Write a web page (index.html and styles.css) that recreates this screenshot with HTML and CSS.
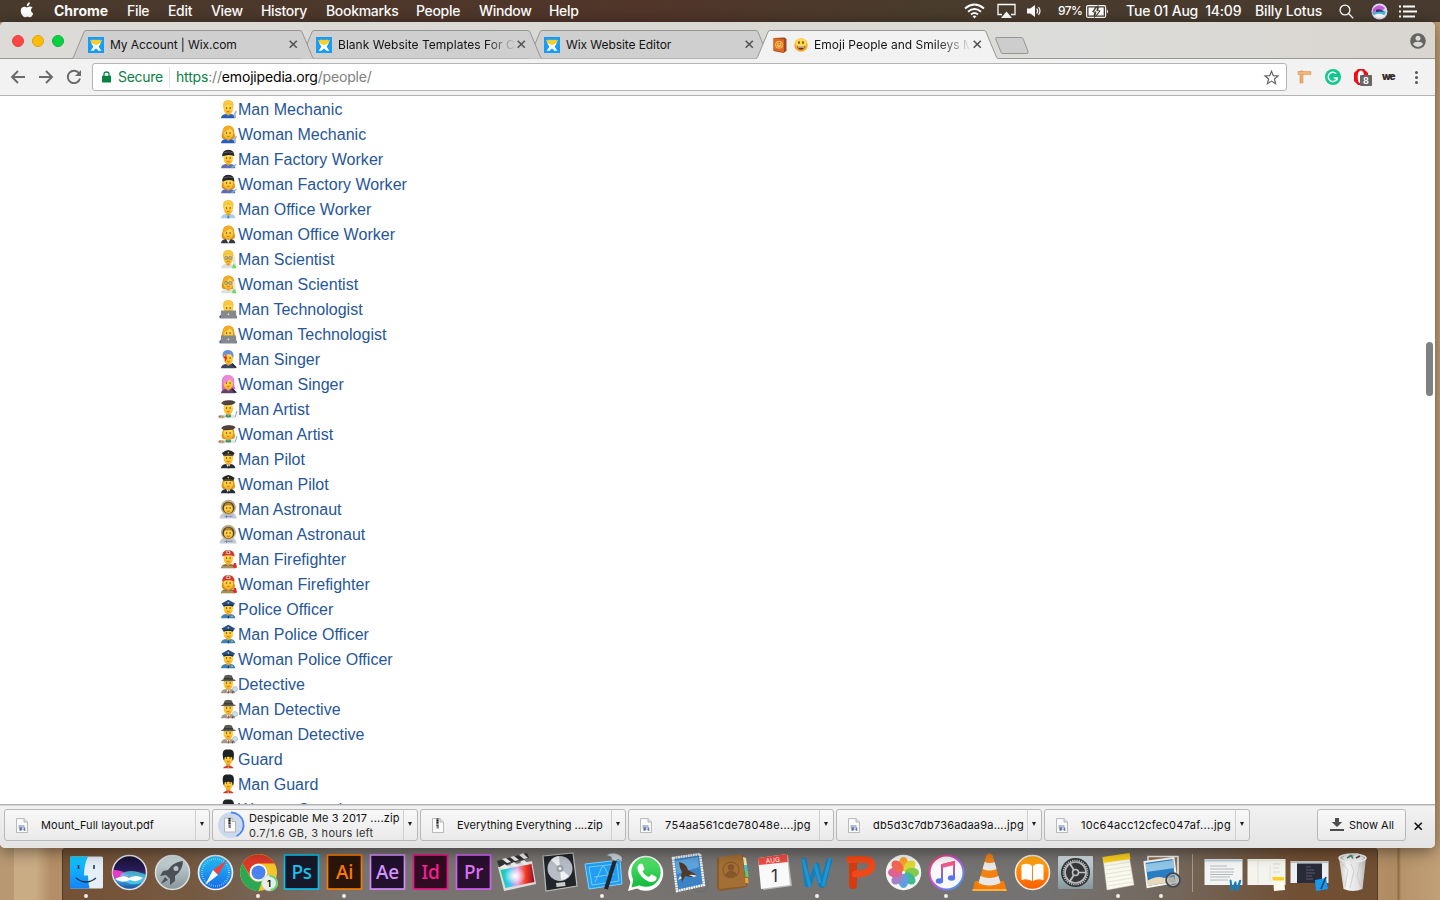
FILE: index.html
```html
<!DOCTYPE html>
<html lang="en">
<head>
<meta charset="utf-8">
<title>Emoji People and Smileys</title>
<link rel="stylesheet" href="styles.css">
</head>
<body>
<svg class="defs" aria-hidden="true">
<defs>
<linearGradient id="skin" x1="0" y1="0" x2="0" y2="1"><stop offset="0" stop-color="#ffe066"/><stop offset=".6" stop-color="#ffcb3a"/><stop offset="1" stop-color="#f3ad22"/></linearGradient>
<linearGradient id="finder" x1="0" y1="0" x2="0" y2="1"><stop offset="0" stop-color="#10ccff"/><stop offset="1" stop-color="#1583f7"/></linearGradient>
<linearGradient id="silver" x1="0" y1="0" x2="0" y2="1"><stop offset="0" stop-color="#cfdcdf"/><stop offset="1" stop-color="#87969c"/></linearGradient>
<linearGradient id="blue" x1="0" y1="0" x2="0" y2="1"><stop offset="0" stop-color="#21c5fa"/><stop offset="1" stop-color="#1767e2"/></linearGradient>
<linearGradient id="orange" x1="0" y1="0" x2="0" y2="1"><stop offset="0" stop-color="#ffae13"/><stop offset="1" stop-color="#ff5d00"/></linearGradient>
<linearGradient id="green" x1="0" y1="0" x2="0" y2="1"><stop offset="0" stop-color="#5ce66d"/><stop offset="1" stop-color="#12b83d"/></linearGradient>
<linearGradient id="rainbow"><stop offset="0" stop-color="#0ccf8f"/><stop offset=".25" stop-color="#35c8f0"/><stop offset=".5" stop-color="#e8a0e0"/><stop offset=".75" stop-color="#f5391d"/><stop offset="1" stop-color="#8a1030"/></linearGradient>
<radialGradient id="glow"><stop offset="0" stop-color="#fff"/><stop offset="1" stop-color="#fff" stop-opacity="0"/></radialGradient>
<linearGradient id="note" x1="0" y1="0" x2="0" y2="1"><stop offset="0" stop-color="#fb4b7d"/><stop offset="1" stop-color="#3c7cf2"/></linearGradient>
<linearGradient id="ring" x1="0" y1="0" x2="1" y2="1"><stop offset="0" stop-color="#fb3c58"/><stop offset=".5" stop-color="#c250e8"/><stop offset="1" stop-color="#20aaf8"/></linearGradient>
<linearGradient id="night" x1="0" y1="0" x2="0" y2="1"><stop offset="0" stop-color="#151230"/><stop offset=".45" stop-color="#2c1c5c"/><stop offset=".75" stop-color="#3a9be0"/><stop offset="1" stop-color="#164c96"/></linearGradient>
<linearGradient id="cup"><stop offset="0" stop-color="#c4c4c4"/><stop offset=".3" stop-color="#f5f5f5"/><stop offset=".7" stop-color="#e2e2e2"/><stop offset="1" stop-color="#b4b4b4"/></linearGradient>

<g id="face"><ellipse cx="10.300" cy="9.300" rx="4.800" ry="5.900" fill="url(#skin)"/><circle cx="8.500" cy="9" r=".7" fill="#4b3312"/><circle cx="12.100" cy="9" r=".7" fill="#4b3312"/><path d="M8.900 12.200q1.400.8 2.800 0" fill="none" stroke="#b5651d" stroke-width=".8"/></g>
<g id="body"><path d="M8.200 13h4.200v4H8.200z" fill="#e3a023"/><path d="M3 19.300Q3 15.500 7.800 14.900l2.500 2 2.500-2q4.400.6 4.500 4.400z" fill="currentColor"/></g>
<path id="short" d="M5.600 8.500Q4 1.300 10.300 1.300T15 8.500L14.200 5.800Q10.300 4.300 6.400 5.800z" fill="#fcc93c" stroke="#d99c1c" stroke-width=".35"/>
<path id="long" d="M5.400 15Q2.600 14 4.300 8.500 5 1.700 10.300 1.600q6 .1 6 7.400 1.900 5-1.100 6z" fill="#dd941a"/>
<path id="fringe" d="M5.300 9Q5 1.800 10.300 1.800T15.400 9Q15 6.500 12 4.500 9.500 6.800 5.300 9z" fill="#f3ad25"/>
<path id="tool" d="M17 11v2l-1.700 2 1 4.100h1.800l-.4-4L19 13l-.6-1.500-.6 1.300z" fill="#aab4bd"/>
<g id="man"><use href="#face"/><use href="#short"/></g>
<g id="woman"><use href="#face"/><use href="#fringe"/></g>
<g id="mechanic-m"><use href="#body" color="#285cc5"/><use href="#man"/><use href="#tool"/></g>
<g id="mechanic-w"><use href="#long"/><use href="#body" color="#285cc5"/><use href="#woman"/><use href="#tool"/></g>
<g id="helmet"><path d="M4.300 7.600Q4 .8 10.300.8t6.100 6.500Q10.300 4.600 4.300 7.600z" fill="#23272c"/><path d="M5.300 4q5-2 10-.2" fill="none" stroke="#626872" stroke-width=".8"/></g>
<g id="factory-m"><use href="#body" color="#5c6eb5"/><use href="#face"/><use href="#helmet"/><path d="M13 18l4-2.500 2-1-2 3-3 1.700z" fill="#74add2"/></g>
<g id="factory-w"><use href="#long"/><use href="#factory-m"/></g>
<g id="office-m"><use href="#body" color="#a8cce9"/><use href="#man"/><path d="M9.700 16.500h1.200l.5 2.800H9.200z" fill="#477cac"/></g>
<g id="office-w"><use href="#long"/><use href="#body" color="#303745"/><use href="#woman"/><path d="M8.300 15.200l2 4 2-4-2 1z" fill="#fff"/></g>
<g id="glasses"><circle cx="8.300" cy="9" r="1.600" fill="#fff6" stroke="#5a5a5a" stroke-width=".6"/><circle cx="12.300" cy="9" r="1.600" fill="#fff6" stroke="#5a5a5a" stroke-width=".6"/><path d="M15 7l2 1 1 9h-3z" fill="#e3e6e8"/><path d="M15 15.500h2l1.500 3.800H14z" fill="#70d85b"/></g>
<g id="science-m"><use href="#body" color="#dce0e0"/><use href="#man"/><use href="#glasses"/></g>
<g id="science-w"><use href="#long"/><use href="#body" color="#dce0e0"/><use href="#woman"/><use href="#glasses"/></g>
<g id="laptop"><path d="M1.500 19.200v-2l2-2h13.400l2 2v2z" fill="#4555ae"/><path d="M3 11.400h15l.3 7.900H2.700z" fill="#85898b"/><circle cx="10.400" cy="15.300" r=".9" fill="#e3e3e3"/></g>
<g id="tech-m"><use href="#man"/><use href="#laptop"/></g><g id="tech-w"><use href="#long"/><use href="#woman"/><use href="#laptop"/></g>
<g id="singer-m"><use href="#body" color="#3c4265"/><use href="#face"/><path d="M5 9Q3 1 10 1q6.500 0 5.300 8L12.500 5 6.500 6z" fill="#6a91d5"/><path d="M8.300 5.500l.5 4.500-1.500 3-.5-3.500-1.500-1z" fill="#e42c33"/><path d="M13 15l4 4 2-.6-4.500-4.400z" fill="#272a35"/></g>
<g id="singer-w"><path d="M5 17Q3 15 4 10 3 1 10 1q8 1 6 10l1.500 4-3 1z" fill="#df6bc4"/><use href="#body" color="#614174"/><use href="#face"/><path d="M5 10Q4 1 10 1q7 0 6 9-3-2-4-5-2 3-7 5z" fill="#ee86d9"/><path d="M13 15l4 4 2-.6-4.500-4.400z" fill="#272a35"/></g>
<g id="artist"><use href="#body" color="#e4e4df"/><use href="#face"/><path d="M3.200 4.500Q5 1 11 1.300q6-.3 6.500 2.500-3 3-11 2.400z" fill="#514241"/><path d="M8 15.300l2.300 1.500 2.300-1.500.6 2.700-2.900.6-2.900-.6z" fill="#36956d"/><path d="M17.200 18l1.800-6" stroke="#5fb0dd" stroke-width="1"/><ellipse cx="3.400" cy="17.700" rx="3.300" ry="1.600" fill="#c4b49b"/><circle cx="2" cy="17.400" r=".9" fill="#d94c37"/><circle cx="4.500" cy="18" r=".8" fill="#51a54c"/></g>
<g id="artist-w"><use href="#long"/><use href="#artist"/></g>
<g id="pilot"><use href="#body" color="#252d38"/><use href="#face"/><path d="M8.300 15.200l2 4.100 2-4.100-2 1z" fill="#fff"/><path d="M10 16.500h.8l.3 2.800H9.700z" fill="#1b202a"/><path d="M4 4l3-2 3.300-1 3.300 1 3 2-1.600 3.300q-4.600-1.200-9.200 0z" fill="#24272a"/><path d="M5.500 6.300q4.700-1.100 9.500 0" fill="none" stroke="#b4924d" stroke-width=".6"/><circle cx="10.300" cy="3.600" r=".8" fill="#edc248"/></g>
<g id="pilot-w"><use href="#long"/><use href="#pilot"/></g>
<g id="astro"><path d="M1.500 19.500q.5-5 5-5.800h7.500q4 .6 4.700 5.800z" fill="#c3c9d8"/><circle cx="10.400" cy="8.300" r="7.600" fill="#bdb08b"/><circle cx="10.400" cy="8.800" r="6" fill="#4d4334"/><ellipse cx="10.400" cy="9.500" rx="4.500" ry="5" fill="url(#skin)"/><circle cx="8.700" cy="9" r=".7" fill="#4b3312"/><circle cx="12.100" cy="9" r=".7" fill="#4b3312"/><path d="M9 12q1.400.7 2.800 0" fill="none" stroke="#9b5515" stroke-width=".7"/><path d="M6.300 7Q7.500 3.500 10.400 3.500t4 3.500q-4-1.700-8 0z" fill="#b9802a"/><path d="M6.500 17.300h8M8.500 16.500v2.500" stroke="#657baa" stroke-width=".8"/></g>
<g id="fire"><use href="#body" color="#8a7044"/><use href="#face"/><path d="M4.200 7.600Q4 .9 10.300.9t6.200 6.700q-6-2.500-12.300 0z" fill="#d9362e"/><path d="M8.300 5V2l2-1 2 1v3z" fill="#d5c4b0"/><circle cx="10.300" cy="3.300" r=".9" fill="#7c3029"/><path d="M4 18h12" stroke="#d5c77b" stroke-width=".8"/><path d="M16 14h2l.4 2 .8 2.500-3 .7-1.500-2z" fill="#e0302b"/></g>
<g id="fire-w"><use href="#long"/><use href="#fire"/></g>
<g id="police"><use href="#body" color="#3b82bd"/><use href="#face"/><path d="M3.600 4.400L10.300.8 17 4.400 15 7.500q-4.700-1.600-9.400 0z" fill="#244f87"/><path d="M5.600 6q4.700-1 9.400 0V7.500q-4.700-1.600-9.400 0z" fill="#192b46"/><circle cx="10.300" cy="3.800" r=".9" fill="#f6c755"/><path d="M9.900 16.500h.9l.3 2.800H9.600z" fill="#16395d"/><circle cx="14" cy="17.200" r=".8" fill="#f6c755"/></g>
<g id="detective"><use href="#body" color="#a3988a"/><use href="#face"/><path d="M8.300 15.200l2 4.100 2-4.100-2 1z" fill="#fff"/><path d="M10 16.300h.7l.3 3H9.700z" fill="#a92e38"/><path d="M5.500 5.200L6.700 1.400l3.600-.6 3.600.6 1.300 3.800q2.400.4 2.700 1.500-7.600 1.300-15.200 0 .5-1 2.800-1.500z" fill="#5b5a54"/><path d="M5.600 4.800h9.500" stroke="#302f2c" stroke-width="1.100"/><circle cx="17" cy="15" r="2.500" fill="#c8e3f1" stroke="#a2abae" stroke-width=".6"/><path d="M15.500 17l-1.500 2.200" stroke="#55483d" stroke-width="1.100"/></g>
<g id="guard"><path d="M8.200 13h4.200v4H8.200z" fill="#e3a023"/><path d="M5 19.300q.8-2.300 5.300-2.500 4.500.2 5.300 2.500z" fill="#c93836"/><use href="#face"/><path d="M4.900 8Q3.800 1 7.700.4h5q4 .7 3.100 7.600-.2 3.300-1.200 3.500L14 8.300q-3.700-1-7.300 0l-.6 3.200Q5 11 4.900 8z" fill="#202326"/><path d="M9.700 17.500h1.300v1.800H9.700z" fill="#e6b345"/></g>
<g id="wix"><rect width="16" height="16" fill="#179cf8"/><path d="M3 5.500h2.600L8 8l2.400-2.500H13l-2.300 4.300 2.600 4H10.500L8 11.500l-2.500 2.300H2.700l2.600-4z" fill="#fff"/><path d="M1.800 2.500l1.900 1L5 2.300l1.400 1L8 2.500l1.600.8L11 2.300l1.300 1.200 1.900-1-1.600 3.800-2 .6L8 8.300 5.400 6.900l-2-.6z" fill="#f8cf2c"/></g>
<path id="close" d="M.7.700l7.100 7.100M7.800.7L.7 7.800" fill="none" stroke="currentColor" stroke-width="1.600"/>
<g id="file"><path d="M.5.500H8L11.500 4V14.500H.5z" fill="#fafafa" stroke="#aaa" stroke-width=".8"/><path d="M8 .5V4h3.500" fill="#ddd" stroke="#aaa" stroke-width=".8"/></g>
<g id="jpg"><use href="#file"/><path d="M2.500 7h6v3.500h-6z" fill="#a9bad6"/><path d="M3.500 9.500h5.800v3.300H8L6.500 11 5 12.800H3.500z" fill="#5f7194"/><circle cx="7" cy="10.500" r="1.200" fill="#c3d3eb"/></g>
<g id="zip"><use href="#file"/><path d="M5.500.5V8" stroke="#222" stroke-width="2.200" stroke-dasharray="1.300 .3"/><path d="M4.600 7.500h2.200v3H4.600z" fill="#777"/></g>
<path id="word" d="M4 8q2-3 5 0l3 18 5-13q2.500-3 5 0l2 12 5-16q3-4 6 0l-7 26q-4 4-7 0l-3-12-4 12q-4 3-7 0z" fill="#147fbd"/>
</defs>
</svg>

<header class="menubar">
  <svg class="apple" viewBox="0 0 14 16"><path d="M9.700.3Q10 2.300 8.700 3.500 7.800 4.300 6.800 4.200 6.700 2.400 7.800 1.300 8.700.4 9.700.3zM12.500 5.600q-1.700 1-1.500 2.900.2 2.200 2.200 3-.5 1.500-1.400 2.700-.8 1.100-1.900 1.100c-1 0-1.300-.6-2.500-.6s-1.600.6-2.500.6q-1 0-2-1.300Q.7 11.400.7 8.900.8 5.300 4 4.700c1.100 0 2 .7 2.800.7s1.800-.8 3.200-.8q1.700.1 2.500 1z" fill="#fff"/></svg>
  <nav class="menus"><b>Chrome</b><span>File</span><span>Edit</span><span>View</span><span>History</span><span>Bookmarks</span><span>People</span><span>Window</span><span>Help</span></nav>
  <div class="status">
    <svg width="21" height="16" viewBox="0 0 21 16" fill="none" stroke="#fff" stroke-width="1.900"><path d="M1 5.500Q10.500-2.300 20 5.500M4 8.700q6.500-5.300 13 0M7 11.500q3.500-2.800 7 0"/><path d="M10.500 15.500l-2-2.200q2-1.500 4 0z" fill="#fff" stroke="none"/></svg>
    <svg width="19" height="16" viewBox="0 0 19 16"><path d="M5 11.500H1v-10h17v10h-4" fill="none" stroke="#fff" stroke-width="1.300"/><path d="M9.500 8.500l5.500 6.500H4z" fill="#fff"/></svg>
    <svg width="14" height="14" viewBox="0 0 14 14"><path d="M0 4.500h3.300L8 1v12L3.300 9.500H0z" fill="#fff"/><path d="M9.700 4.500q2 2.500 0 5M11.500 3q3 4 0 8" fill="none" stroke="#fff" stroke-width="1.200"/></svg>
    <span class="battery-text">97%</span>
    <svg width="23" height="13" viewBox="0 0 23 13"><rect x=".6" y=".6" width="19" height="11.800" rx="1.500" fill="none" stroke="#fff" stroke-width="1.200"/><path d="M2.500 2.500H9L6 7h2.500L7.500 10.500h-5zM13 2.500h4.700v8H11l3.500-4.700H12z" fill="#fff"/><path d="M12 .5L7 7h3L8.500 12.500 14 5.800h-3.200z" fill="#fff" stroke="#493b2f" stroke-width=".9"/><path d="M21 4.500q2 2 0 4z" fill="#fff"/></svg>
    <span class="clock">Tue 01 Aug&nbsp; 14:09</span><span class="user">Billy Lotus</span>
    <svg width="15" height="15" viewBox="0 0 15 15" fill="none" stroke="#fff" stroke-width="1.300"><circle cx="6" cy="6" r="4.900"/><path d="M9.500 9.500l4.700 4.700"/></svg>
    <svg width="17" height="17" viewBox="0 0 17 17"><circle cx="8.500" cy="8.500" r="8" fill="#dfdcf7"/><path d="M2 6Q8-1 14 5L11 8Q6 6 1.500 11z" fill="#c95bd4"/><path d="M2 10q6-6 13-1l-2 3q-5-3-11 0z" fill="#44b9e2"/><path d="M5 7q4-2 8 2-4-1-8 0" fill="#353265"/><path d="M3 13q6-4 11 0-5 4-11 0" fill="#fff"/></svg>
    <svg width="18" height="13" viewBox="0 0 18 13" stroke="#fff" stroke-width="2"><path d="M0 1.500h2M4 1.500h12M0 6.500h2M4 6.500h14M0 11.500h2M4 11.500h12"/></svg>
  </div>
</header>

<main class="window">
  <div class="tabstrip">
    <div class="lights"><i class="red"></i><i class="yellow"></i><i class="green"></i></div>
    <div class="tabs">
      <div class="tab first"><svg class="shape" viewBox="0 0 242 29"><path d="M0 28.500Q1.500 28 2 26L12 2Q12.500.5 14 .5H228q1.500 0 2 1.500l10 24q.5 2 2 2.500"/></svg><svg class="favicon" viewBox="0 0 16 16"><use href="#wix"/></svg><span class="title">My Account | Wix.com</span><svg class="x" viewBox="0 0 9 9"><use href="#close"/></svg></div>
      <div class="tab second"><svg class="shape" viewBox="0 0 242 29"><path d="M0 28.500Q1.500 28 2 26L12 2Q12.500.5 14 .5H228q1.500 0 2 1.500l10 24q.5 2 2 2.500"/></svg><svg class="favicon" viewBox="0 0 16 16"><use href="#wix"/></svg><span class="title faded">Blank Website Templates For C</span><svg class="x" viewBox="0 0 9 9"><use href="#close"/></svg></div>
      <div class="tab third"><svg class="shape" viewBox="0 0 242 29"><path d="M0 28.500Q1.500 28 2 26L12 2Q12.500.5 14 .5H228q1.500 0 2 1.500l10 24q.5 2 2 2.500"/></svg><svg class="favicon" viewBox="0 0 16 16"><use href="#wix"/></svg><span class="title">Wix Website Editor</span><svg class="x" viewBox="0 0 9 9"><use href="#close"/></svg></div>
      <div class="tab active"><svg class="shape" viewBox="0 0 242 29"><path d="M0 29.500V28.500Q1.500 28 2 26L12 2Q12.500.5 14 .5H228q1.500 0 2 1.500l10 24q.5 2 2 2.500v1z" stroke="none"/><path d="M0 28.500Q1.500 28 2 26L12 2Q12.500.5 14 .5H228q1.500 0 2 1.500l10 24q.5 2 2 2.500"/></svg><svg class="favicon" viewBox="0 0 16 16"><path d="M1.500 1l11-.5 2 1.500v12l-3 2-10-2z" fill="#9c4a20"/><path d="M1.500 1l10.500 1.500v13L1.500 13z" fill="#e0672a"/><circle cx="7" cy="7.700" r="3.900" fill="#f4c14b"/><circle cx="7" cy="7.700" r="2.900" fill="#ea8424"/><path d="M5.500 6.700h1M8 6.700h1M5 8.200q2 2.500 4 0" stroke="#fff0a0" fill="none"/></svg>
        <svg class="smiley" viewBox="0 0 14 14"><circle cx="7" cy="7" r="6.700" fill="#f8a428"/><ellipse cx="7" cy="5" rx="5.700" ry="4.500" fill="#ffdc4a"/><ellipse cx="5" cy="4.500" rx=".8" ry="1.600" fill="#613b13"/><ellipse cx="9" cy="4.500" rx=".8" ry="1.600" fill="#613b13"/><path d="M3 7.800q4 1 8 0Q10.300 11.800 7 11.800T3 7.800z" fill="#733811"/><path d="M3.600 8.200q3.400.7 6.800 0l-.6 1.200H4.200z" fill="#fff"/></svg><span class="title faded">Emoji People and Smileys M</span><svg class="x" viewBox="0 0 9 9"><use href="#close"/></svg></div>
    </div>
    <svg class="newtab" viewBox="0 0 34 17"><path d="M2 .5h24q1.500 0 2 1l5 13q.5 2-1 2H8q-1.500 0-2-1.500L.7 2Q.3.500 2 .5z" fill="#cdcdcd" stroke="#969694"/></svg>
    <svg class="profile" viewBox="0 0 16 16"><circle cx="8" cy="8" r="7.800" fill="#646464"/><circle cx="8" cy="5.300" r="2.500" fill="#dbd9d6"/><path d="M3 11.200q1-2.400 5-2.400t5 2.400q-2 2.700-5 2.700t-5-2.700z" fill="#dbd9d6"/></svg>
  </div>
  <div class="toolbar">
    <div class="navs">
      <svg viewBox="0 0 16 16"><path d="M15 8H2M8 2L2 8l6 6"/></svg>
      <svg viewBox="0 0 16 16"><path d="M1 8h13M8 2l6 6-6 6"/></svg>
      <svg viewBox="0 0 16 16"><path d="M13.300 4.700A6.200 6.200 0 1 0 14 9.500"/><path d="M15 1v6H9z" fill="#6a6a6a" stroke="none"/></svg>
    </div>
    <div class="omnibox">
      <svg class="lock" viewBox="0 0 9 12"><path d="M0 4.800h9v6.700H0z" fill="#0b8043"/><path d="M2 5.500V3q0-2 2.500-2T7 3v2.500" fill="none" stroke="#0b8043" stroke-width="1.300"/></svg>
      <span class="secure">Secure</span>
      <span class="url"><span class="scheme">https</span>://<span class="host">emojipedia.org</span>/people/</span>
      <svg class="star" viewBox="0 0 15 15"><path d="M7.500 1.300l1.800 4.400 4.700.3-3.600 3 1.200 4.700-4.100-2.600-4.100 2.600L4.600 9 1 6l4.700-.3z" fill="none" stroke="#626262" stroke-width="1.200"/></svg>
    </div>
    <div class="extensions">
      <svg width="16" height="16" viewBox="0 0 16 16"><path d="M3 2h3v12H3z" fill="#efb676" stroke="#d68e50" stroke-width=".6"/><path d="M1 2.500h13v3H1z" fill="#f0b67a" stroke="#d68e50" stroke-width=".5"/><path d="M3 8h1.500M3 10h1.500M3 12h1.500" stroke="#ce8349" stroke-width=".6"/></svg>
      <svg width="16" height="16" viewBox="0 0 16 16"><circle cx="8" cy="8" r="8" fill="#11c78b"/><path d="M11.200 4.700A4.600 4.600 0 1 0 12.300 9H8.700M12 8.500v3" fill="none" stroke="#fff" stroke-width="1.400"/></svg>
      <span class="opera"><svg width="16" height="16" viewBox="0 0 16 16"><path d="M5 0h6l4 4v8l-4 4H5l-4-4V4z" fill="#f00d16"/><path d="M8 1.500q-3.300 0-3.300 6.500T8 14.500q3 0 3-6.500T8 1.500z" fill="#fff"/></svg><b>8</b></span>
      <span class="we">we</span>
      <i class="dots"></i>
    </div>
  </div>
  <section class="page">
    <ul class="people">
      <li><svg viewBox="0 0 20 20"><use href="#mechanic-m"/></svg><a>Man Mechanic</a></li>
      <li><svg viewBox="0 0 20 20"><use href="#mechanic-w"/></svg><a>Woman Mechanic</a></li>
      <li><svg viewBox="0 0 20 20"><use href="#factory-m"/></svg><a>Man Factory Worker</a></li>
      <li><svg viewBox="0 0 20 20"><use href="#factory-w"/></svg><a>Woman Factory Worker</a></li>
      <li><svg viewBox="0 0 20 20"><use href="#office-m"/></svg><a>Man Office Worker</a></li>
      <li><svg viewBox="0 0 20 20"><use href="#office-w"/></svg><a>Woman Office Worker</a></li>
      <li><svg viewBox="0 0 20 20"><use href="#science-m"/></svg><a>Man Scientist</a></li>
      <li><svg viewBox="0 0 20 20"><use href="#science-w"/></svg><a>Woman Scientist</a></li>
      <li><svg viewBox="0 0 20 20"><use href="#tech-m"/></svg><a>Man Technologist</a></li>
      <li><svg viewBox="0 0 20 20"><use href="#tech-w"/></svg><a>Woman Technologist</a></li>
      <li><svg viewBox="0 0 20 20"><use href="#singer-m"/></svg><a>Man Singer</a></li>
      <li><svg viewBox="0 0 20 20"><use href="#singer-w"/></svg><a>Woman Singer</a></li>
      <li><svg viewBox="0 0 20 20"><use href="#artist"/></svg><a>Man Artist</a></li>
      <li><svg viewBox="0 0 20 20"><use href="#artist-w"/></svg><a>Woman Artist</a></li>
      <li><svg viewBox="0 0 20 20"><use href="#pilot"/></svg><a>Man Pilot</a></li>
      <li><svg viewBox="0 0 20 20"><use href="#pilot-w"/></svg><a>Woman Pilot</a></li>
      <li><svg viewBox="0 0 20 20"><use href="#astro"/></svg><a>Man Astronaut</a></li>
      <li><svg viewBox="0 0 20 20"><use href="#astro"/></svg><a>Woman Astronaut</a></li>
      <li><svg viewBox="0 0 20 20"><use href="#fire"/></svg><a>Man Firefighter</a></li>
      <li><svg viewBox="0 0 20 20"><use href="#fire-w"/></svg><a>Woman Firefighter</a></li>
      <li><svg viewBox="0 0 20 20"><use href="#police"/></svg><a>Police Officer</a></li>
      <li><svg viewBox="0 0 20 20"><use href="#police"/></svg><a>Man Police Officer</a></li>
      <li><svg viewBox="0 0 20 20"><use href="#police"/></svg><a>Woman Police Officer</a></li>
      <li><svg viewBox="0 0 20 20"><use href="#detective"/></svg><a>Detective</a></li>
      <li><svg viewBox="0 0 20 20"><use href="#detective"/></svg><a>Man Detective</a></li>
      <li><svg viewBox="0 0 20 20"><use href="#detective"/></svg><a>Woman Detective</a></li>
      <li><svg viewBox="0 0 20 20"><use href="#guard"/></svg><a>Guard</a></li>
      <li><svg viewBox="0 0 20 20"><use href="#guard"/></svg><a>Man Guard</a></li>
      <li><svg viewBox="0 0 20 20"><use href="#guard"/></svg><a>Woman Guard</a></li>
    </ul>
    <i class="scrollbar"></i>
  </section>
  <footer class="downloads">
    <div class="item"><svg class="doc" viewBox="0 0 12 15"><use href="#jpg"/></svg><span class="name pdf">Mount_Full layout.pdf</span><i class="more"></i></div>
    <div class="item progress"><svg class="ringdoc" viewBox="0 0 28 28"><circle cx="14" cy="14" r="13" fill="#cbd8ee"/><path d="M14 1.500A12.500 12.500 0 0 1 19.500 25.300" fill="none" stroke="#4c86ef" stroke-width="1.800"/><use href="#zip" x="7" y="6.500"/></svg><span class="name">Despicable Me 3 2017 ....zip<br><small>0.7/1.6 GB, 3 hours left</small></span><i class="more"></i></div>
    <div class="item"><svg class="doc" viewBox="0 0 12 15"><use href="#zip"/></svg><span class="name">Everything Everything ....zip</span><i class="more"></i></div>
    <div class="item"><svg class="doc" viewBox="0 0 12 15"><use href="#jpg"/></svg><span class="name wide">754aa561cde78048e....jpg</span><i class="more"></i></div>
    <div class="item"><svg class="doc" viewBox="0 0 12 15"><use href="#jpg"/></svg><span class="name db">db5d3c7db736adaa9a....jpg</span><i class="more"></i></div>
    <div class="item"><svg class="doc" viewBox="0 0 12 15"><use href="#jpg"/></svg><span class="name wide">10c64acc12cfec047af....jpg</span><i class="more"></i></div>
    <div class="showall"><svg viewBox="0 0 14 14"><path d="M5 0h4v4h3.300L7 9 1.700 4H5z" fill="#4d4d4d"/><path d="M0 12h14" stroke="#4d4d4d" stroke-width="2"/></svg>Show All</div>
    <svg class="dismiss" viewBox="0 0 9 9"><use href="#close"/></svg>
  </footer>
</main>

<nav class="dock">
  <div class="app running"><svg viewBox="0 0 43 50"><rect x="5" y="6.500" width="33" height="32" rx="1.500" fill="#e6eef8"/><path d="M5 6.500h18q-4 8-4 19h4q0 7 1.500 13H5z" fill="url(#finder)"/><path d="M13.500 15v4M29 15v4" stroke="#17314a" stroke-width="1.500"/><path d="M11 28q10 8 20 0" fill="none" stroke="#17314a" stroke-width="1.300"/></svg></div>
  <div class="app"><svg viewBox="0 0 43 50"><circle cx="21.500" cy="22.500" r="17" fill="url(#night)" stroke="#e5e5ea" stroke-width="1.500"/><path d="M5 20q8-1 16 6l-8 4q-7 0-8.500-7z" fill="#e83cc4"/><path d="M12 25q9-8 26 0-2 11-16 9-6-2-10-9z" fill="#54d8ec" opacity=".7"/><path d="M7 29q8-5 14-1 7-4 14 0-6 5-13 2-8 4-15-1" fill="#fff"/></svg></div>
  <div class="app"><svg viewBox="0 0 43 50"><circle cx="21.500" cy="22.500" r="17" fill="url(#silver)" stroke="#d9dfe0" stroke-width="1.500"/><path d="M32 11Q22 12 17 20l-5 1-3 5 6-1 4 4 0 6 5-4v-5q8-6 8-15z" fill="#4b5156"/><path d="M14 27l3 3-7 4z" fill="#4b5156"/><circle cx="25" cy="18.500" r="2.500" fill="#b6c3c7"/></svg></div>
  <div class="app"><svg viewBox="0 0 43 50"><circle cx="21.500" cy="22.500" r="17" fill="url(#blue)" stroke="#eee" stroke-width="1.700"/><circle cx="21.500" cy="22.500" r="13.500" fill="none" stroke="#c3edff" stroke-width="2" stroke-dasharray=".5 1.600"/><path d="M33 10L24 25l-5-5z" fill="#f0433c"/><path d="M11 35l8-15 5 5z" fill="#f5f5f5"/></svg></div>
  <div class="app running"><svg viewBox="0 0 43 50"><circle cx="21.500" cy="22.500" r="18.500" fill="#f5c628"/><path d="M5.500 13.500a18.500 18.500 0 0 1 32 0H21.500a9 9 0 0 0-8 13z" fill="#df3a2b"/><path d="M5.500 13.500l8 14a9 9 0 0 0 12 3L21.500 41A18.500 18.500 0 0 1 5.500 13.500z" fill="#2ca754"/><circle cx="21.500" cy="22.500" r="8.700" fill="#fff"/><circle cx="21.500" cy="22.500" r="7" fill="#4a83ed"/><circle cx="32.500" cy="33" r="8" fill="#e5efe6" stroke="#bbb" stroke-width=".6"/><path d="M32.500 26a7 7 0 0 1 1 14" fill="none" stroke="#65d66b" stroke-width="2"/><text x="32" y="36.500" text-anchor="middle" font-size="9.500" font-weight="600">1</text></svg></div>
  <div class="app"><svg class="adobe" viewBox="0 0 43 50"><rect x="4.500" y="5" width="34" height="34" fill="#17192b" stroke="#0bbfe7" stroke-width="1.700"/><text x="21.500" y="29" fill="#18c4ed">Ps</text></svg></div>
  <div class="app running"><svg class="adobe" viewBox="0 0 43 50"><rect x="4.500" y="5" width="34" height="34" fill="#2b150b" stroke="#f57a00" stroke-width="1.700"/><text x="21.500" y="29" fill="#ff7c00">Ai</text></svg></div>
  <div class="app"><svg class="adobe" viewBox="0 0 43 50"><rect x="4.500" y="5" width="34" height="34" fill="#21102e" stroke="#d18bfa" stroke-width="1.700"/><text x="21.500" y="29" fill="#d696ff">Ae</text></svg></div>
  <div class="app"><svg class="adobe" viewBox="0 0 43 50"><rect x="4.500" y="5" width="34" height="34" fill="#310b21" stroke="#ec168c" stroke-width="1.700"/><text x="21.500" y="29" fill="#fa1e96">Id</text></svg></div>
  <div class="app"><svg class="adobe" viewBox="0 0 43 50"><rect x="4.500" y="5" width="34" height="34" fill="#28102e" stroke="#d55ef2" stroke-width="1.700"/><text x="21.500" y="29" fill="#df70fa">Pr</text></svg></div>
  <div class="app"><svg viewBox="0 0 43 50"><path d="M3 17l34-6 4 23-32 7z" fill="#ddd"/><path d="M5.500 20l31-6 3 18-29 6z" fill="url(#rainbow)"/><ellipse cx="20" cy="26" rx="11" ry="9" fill="url(#glow)"/><path d="M2 11l30-8 2 5-30 9z" fill="#333"/><path d="M7 9l5 4 4-1-5-4zM15 7l5 4 4-1-5-4zM24 5l5 4 4-1-5-5zM5 17l4 2 5-1-4-4zM15 14l4 3 5-1-5-4zM25 12l4 3 5-1-5-4z" fill="#eee"/></svg></div>
  <div class="app"><svg viewBox="0 0 43 50"><path d="M5 6l30-3 4 33-31 5z" fill="#222529" stroke="#bbb" stroke-width="1.200"/><circle cx="22" cy="18.500" r="12.500" fill="#b9bdc8"/><path d="M22 18L13 10a12 12 0 0 1 8-4zM22 18l9 8a12 12 0 0 1-8 4z" fill="#f0f1f3"/><circle cx="22" cy="18.500" r="3.500" fill="#989da3"/><circle cx="22" cy="18.500" r="1.500" fill="#eee"/><path d="M18 33l9-1 .5 4-9 1z" fill="#ccc"/></svg></div>
  <div class="app running"><svg viewBox="0 0 43 50"><path d="M4 14l35-4 2 24-33 5z" fill="#1f9ef5" stroke="#81d3ff"/><path d="M8 17l28-3 2 17-27 4zM14 32l8-17 8 14M13 27l20-3" fill="none" stroke="#7cc9fa" stroke-width="1"/><path d="M34 10L25 39" stroke="#22272a" stroke-width="4"/><path d="M25 5q9-5 16 2l0 5-4-3-2 2-4-1-1-3z" fill="#c9d4d9" stroke="#667078" stroke-width=".6"/></svg></div>
  <div class="app"><svg viewBox="0 0 43 50"><path d="M4 41l2.500-9A17.500 17.500 0 1 1 13 38.500z" fill="#fff"/><circle cx="22" cy="22" r="14.700" fill="url(#green)"/><path d="M9.500 29l-2 8.500 8-2z" fill="#1fc145"/><path d="M14.500 15q2.500-2.500 4-1l2 5-2 2.500q3 4.500 6.500 5.500l2.500-2.700 5 2.700q.5 3-2.500 4.500-5 2-12-4.500-7-8-3.500-12z" fill="#fff"/></svg></div>
  <div class="app"><svg viewBox="0 0 43 50"><circle cx="33" cy="34" r="8" fill="none" stroke="#656970"/><path d="M6 8l27-4 4 31-27 6z" fill="#3c82c4" stroke="#f4f4ef" stroke-width="2.500" stroke-dasharray="2 .5"/><path d="M8 11l23-4 1 10-22 7z" fill="#5fa4dc"/><path d="M12 12q7 1 9 8 5 2 9 6l-6 1-6-1-3 6-1-7q2-2-1-7z" fill="#4e3a28"/><path d="M22 25q4-1 8 1l-3 1zM13 26l-2 4 4-2z" fill="#eee"/></svg></div>
  <div class="app"><svg viewBox="0 0 43 50"><path d="M7 8l26-3 4 32-26 4-4-2z" fill="#8b5b28"/><path d="M9 7l23-3 4 32-27 3z" fill="#a46f34"/><path d="M33 7l3 1 1 7h-3z" fill="#f5e4ad"/><path d="M34 15l3 0 .5 6h-3z" fill="#43bfcf"/><path d="M35 21l3 0 .5 6h-3z" fill="#66c867"/><path d="M35 28l3 0 .5 5h-3z" fill="#f2a734"/><circle cx="21" cy="20" r="8" fill="none" stroke="#85562a"/><circle cx="21" cy="17.500" r="3.200" fill="#85562a"/><path d="M15 26q1-5 6-5t6 4q-6 4-12 1z" fill="#85562a"/></svg></div>
  <div class="app"><svg viewBox="0 0 43 50"><path d="M6 9l29-4 4 31-29 4z" fill="#b8b9bb"/><path d="M5 8l29-4 3 31-29 4z" fill="#fafafa"/><path d="M5 8l29-4 .7 8-29 3z" fill="#ee4d46"/><text transform="rotate(-6 20 12)" x="20" y="12.500" text-anchor="middle" fill="#fff" font-size="6.500">AUG</text><text x="21.500" y="31.500" text-anchor="middle" fill="#333" font-size="17">1</text></svg></div>
  <div class="app running"><svg viewBox="0 0 43 50"><use href="#word" x="1.500" y="1"/><path d="M7 9l7 28M19 14l5 19M34 8l-7 28" stroke="#2ba5dc" stroke-width="3" opacity=".6"/></svg></div>
  <div class="app"><svg viewBox="0 0 43 50"><path d="M14 12v23" fill="none" stroke="#d63a10" stroke-width="8" stroke-linecap="round"/><path d="M10.500 9.500h14q10 0 8 8-2.500 6.500-16 6.500" fill="none" stroke="#ef4919" stroke-width="7" stroke-linejoin="round" stroke-linecap="round"/></svg></div>
  <div class="app"><svg viewBox="0 0 43 50"><circle cx="21.500" cy="22.500" r="17.700" fill="#f5f5f3"/><g transform="translate(21.500 22.500)" opacity=".95"><ellipse cy="-8.500" rx="4.800" ry="7" fill="#ff9f21"/><ellipse cy="-8.500" rx="4.800" ry="7" fill="#ddd828" transform="rotate(45)"/><ellipse cy="-8.500" rx="4.800" ry="7" fill="#80c843" transform="rotate(90)"/><ellipse cy="-8.500" rx="4.800" ry="7" fill="#38b48f" transform="rotate(135)"/><ellipse cy="-8.500" rx="4.800" ry="7" fill="#559bdf" transform="rotate(180)"/><ellipse cy="-8.500" rx="4.800" ry="7" fill="#a07ac7" transform="rotate(225)"/><ellipse cy="-8.500" rx="4.800" ry="7" fill="#df5b91" transform="rotate(270)"/><ellipse cy="-8.500" rx="4.800" ry="7" fill="#f1614c" transform="rotate(315)"/></g></svg></div>
  <div class="app running"><svg viewBox="0 0 43 50"><circle cx="21.500" cy="22.500" r="17" fill="#f9f9fa" stroke="url(#ring)" stroke-width="2"/><path d="M17 31V15l12-3v16" fill="none" stroke="url(#note)" stroke-width="2"/><path d="M17 14l12-3v4l-12 3z" fill="#f2588e"/><ellipse cx="14.500" cy="31" rx="3.700" ry="2.700" fill="#5b75eb"/><ellipse cx="26.500" cy="28" rx="3.700" ry="2.700" fill="#5b75eb"/></svg></div>
  <div class="app"><svg viewBox="0 0 43 50"><path d="M7 31h29l2.500 10h-34z" fill="#f47b05"/><path d="M18.500 5q3-3 6 0l8.500 30q-11.500 5-23 0z" fill="#f38212"/><path d="M16.600 12q5 2 10 0l2 7q-7 3-14 0zM12.500 26q9 4 18 0l2 7q-11 5-22 0z" fill="#e8e8e8"/><path d="M4.500 39h34v2h-34z" fill="#ffb143"/></svg></div>
  <div class="app"><svg viewBox="0 0 43 50"><circle cx="21.500" cy="22.500" r="17" fill="url(#orange)" stroke="#f5eee5" stroke-width="1.500"/><path d="M10.500 15q7-3 10.500 1v15q-5-3-10.500-1zM22 16q4-4 10.500-1v15q-6-2-10.500 1z" fill="#fff"/></svg></div>
  <div class="app"><svg viewBox="0 0 43 50"><rect x="4" y="6" width="35" height="33" rx="1" fill="url(#silver)"/><circle cx="21.500" cy="22.500" r="14.500" fill="#343638"/><circle cx="21.500" cy="22.500" r="10.500" fill="none" stroke="#b8bbbd" stroke-width="1.700"/><circle cx="21.500" cy="22.500" r="12" fill="none" stroke="#c6c8ca" stroke-width="1.700" stroke-dasharray="1.200 1"/><circle cx="21.500" cy="22.500" r="3" fill="none" stroke="#c2c4c5" stroke-width="1.500"/><path d="M25 22.500h7M19.500 19.500l-4-6.500M19.500 25.500l-4 6.500" stroke="#c2c4c5" stroke-width="1.700"/></svg></div>
  <div class="app running"><svg viewBox="0 0 43 50"><path d="M6 8l26-3 5 30-27 5z" fill="#faf9ed" stroke="#c8c6b9" stroke-width=".5"/><path d="M5.500 7l27-4 1 6-27 4z" fill="#fbd01c"/><path d="M8 16l25-4M9 20l25-4M9 24l25-4M10 28l25-4M10 32l25-4M11 36l25-4" stroke="#dedcd4" stroke-width=".8"/></svg></div>
  <div class="app running"><svg viewBox="0 0 43 50"><path d="M8 6.500h30v26H8z" fill="#90724c" stroke="#eee" stroke-width="1.500"/><path d="M4.500 12l29-4 3 24-29 5z" fill="#2a7cc4" stroke="#f7f7f5" stroke-width="2"/><path d="M5.500 14l28-4 1 8-28 4z" fill="#91c6e6"/><path d="M7 31q10-6 17-3l10-1 1 4-27 5z" fill="#ead9b6"/><circle cx="33" cy="30" r="6.800" fill="#8d939388" stroke="#43494b" stroke-width="2"/><circle cx="33" cy="30" r="5.500" fill="none" stroke="#d5d8d8" stroke-width=".7"/></svg></div>
  <i class="divider"></i>
  <div class="app"><svg viewBox="0 0 43 50"><rect x="2.500" y="9" width="38" height="26" fill="#f3f4f4"/><path d="M3 10.500h37" stroke="#bccbd8" stroke-width="2"/><path d="M8 16h17M8 19h24M8 22h24M8 24.500h23M8 27h20M8 30h18" stroke="#a5a8ab" stroke-width=".8"/><use href="#word" transform="translate(26 27) scale(.38)"/></svg></div>
  <div class="app"><svg viewBox="0 0 43 50"><rect x="2.500" y="9" width="38" height="26" fill="#f4f4ee"/><path d="M3 10.500h37M13 11v23M25 15v16" stroke="#dfdccf" stroke-width=".8"/><path d="M28 14h7M28 18h6M28 22h7" stroke="#d2d1ca" stroke-width=".8"/><path d="M28 28h11l1 12-11 1z" fill="#fffced"/><path d="M27 27h12v3.500H28z" fill="#ffcf21"/></svg></div>
  <div class="app"><svg viewBox="0 0 43 50"><rect x="2.500" y="11" width="38" height="22" fill="#eceef3"/><path d="M3 12h37" stroke="#c2c4ca" stroke-width="2"/><rect x="9" y="13.500" width="25" height="19.500" fill="#292b38"/><path d="M18 17h5M18 20h8M18 23h9M18 26h6M18 29h7" stroke="#6b6277" stroke-width=".8"/><path d="M27 30l11-2 2 11-12 2z" fill="#169af1"/><path d="M38 27l-5 12" stroke="#1d4860" stroke-width="1.700"/></svg></div>
  <div class="app"><svg viewBox="0 0 43 50"><path d="M8 8h27l-3.500 31q-9.500 4-19 0z" fill="url(#cup)"/><ellipse cx="21.500" cy="8" rx="13.500" ry="4" fill="#b7b9b9" stroke="#f3f3f3" stroke-width="1.500"/><path d="M11 8l5-4 5 3 5-4 7 5-4 3H15z" fill="#eee"/><path d="M16 8l4-2.500 2 3" fill="none" stroke="#3c8a6d" stroke-width="1.500"/><path d="M25 8l4-2" stroke="#554050" stroke-width="1.500"/><path d="M12 14l5 6-3 17M29 13l-3 13 4 11M20 14l3 7-4 17" fill="none" stroke="#c4c2c2" stroke-width=".7"/></svg></div>
</nav>
</body>
</html>
```
FILE: styles.css
```css
* { box-sizing: border-box; }
body { margin: 0; width: 1440px; height: 900px; overflow: hidden; font-family: Inter, "Liberation Sans", sans-serif; background: linear-gradient(90deg, #b89773 0 1%, #c9ab84 1% 2.5%, #b48e66 3.5%, #b48e66 95%, #ae8b63 97%, #8a6a45 97.100%, #b69369 97.300%, #c2a077); display: flex; flex-direction: column; }
.defs { position: absolute; width: 0; height: 0; }
svg { display: block; flex: none; overflow: visible; }
i { font-style: normal; }

.menubar { height: 22px; flex: none; display: flex; align-items: center; background: linear-gradient(90deg, #483a2d, #513529 45%, #493c2d 65%, #483a2f); color: #fff; font-size: 14px; font-weight: 500; line-height: 22px; letter-spacing: -.32px; white-space: nowrap; padding-left: 20px; }
.apple { width: 14px; height: 16px; margin-top: -3px; }
.menus { margin-left: 20px; display: grid; grid-template-columns: 73px 41px 43px 50px 65px 90px 63px 70px 40px; }
.menus b { font-weight: 700; letter-spacing: 0; }
.status { display: flex; align-items: center; margin-left: 375px; }
.status svg:nth-of-type(1) { margin-right: 12px; }
.status svg:nth-of-type(2) { margin-right: 11px; }
.battery-text { width: 28px; margin-left: 17px; font-size: 12px; letter-spacing: -.65px; }
.clock { width: 129px; margin-left: 17px; letter-spacing: -.2px; }
.user { width: 84px; letter-spacing: -.15px; }
.status svg:nth-of-type(6) { margin-left: 17px; }
.status svg:nth-of-type(7) { margin-left: 11px; }

.window { width: 1435px; height: 826px; flex: none; display: flex; flex-direction: column; background: #fff; border-radius: 5px; overflow: hidden; box-shadow: 0 3px 16px #0007; z-index: 1; }
.tabstrip { height: 37px; flex: none; display: flex; align-items: flex-start; background: linear-gradient(90deg, #dddbd7, #dad8d3 50%, #dcdcda 75%, #d9d5cf); border-bottom: 1px solid #969694; }
.lights { display: flex; gap: 8px; padding: 13px 0 0 12px; width: 72px; flex: none; }
.lights i { width: 12px; height: 12px; border-radius: 50%; }
.red { background: #ff4846; border: 1px solid #e8403c; }
.yellow { background: #ffbd05; border: 1px solid #dfa210; }
.green { background: #08d142; border: 1px solid #0eb23a; }
.tabs { display: flex; padding-top: 8px; }
.tab { width: 242px; height: 29px; flex: none; position: relative; display: flex; align-items: center; padding-left: 16px; font-size: 12px; color: #141414; margin-right: -14px; }
.first { z-index: 3; } .second { z-index: 2; } .third { z-index: 1; } .active { z-index: 4; margin-right: 0; }
.shape { position: absolute; left: 0; top: 0; width: 242px; height: 29px; z-index: -1; }
.shape path { fill: #cfcfcf; stroke: #969694; }
.active .shape path { fill: #f2f2f2; }
.active .shape path:first-child { stroke: none; }
.favicon { width: 16px; height: 16px; }
.title { width: 178px; margin-left: 6px; line-height: 20px; white-space: nowrap; letter-spacing: -.08px; }
.faded { letter-spacing: .03px; -webkit-mask-image: linear-gradient(90deg, #000 148px, transparent 178px); mask-image: linear-gradient(90deg, #000 148px, transparent 178px); }
.x { width: 9px; height: 9px; color: #555; margin-left: .5px; }
.smiley { width: 14px; height: 14px; margin-left: 6px; }
.active .title { width: 155px; margin-left: 6px; margin-right: 3px; }
.active .faded { -webkit-mask-image: linear-gradient(90deg, #000 122px, transparent 158px); mask-image: linear-gradient(90deg, #000 122px, transparent 158px); }
.newtab { width: 34px; height: 17px; margin: 15px 0 0 -3px; z-index: 5; }
.profile { width: 16px; height: 16px; margin: 11px 9px 0 auto; }

.toolbar { height: 37px; flex: none; background: #f2f2f2; border-bottom: 1px solid #b3b3b3; display: flex; align-items: center; }
.navs { display: flex; gap: 12px; padding-left: 10px; width: 92px; flex: none; }
.navs svg { width: 16px; height: 16px; fill: none; stroke: #6a6a6a; stroke-width: 1.900; }
.omnibox { width: 1195px; height: 28px; flex: none; background: #fff; border: 1px solid #b4b4b4; border-radius: 3px; display: flex; align-items: center; font-size: 14px; padding-left: 9px; }
.lock { width: 9px; height: 12px; }
.secure { color: #0b8043; width: 52px; margin-left: 7px; line-height: 20px; border-right: 1px solid #e1e1e1; letter-spacing: -.3px; }
.url { color: #808080; margin-left: 6px; letter-spacing: -.17px; line-height: 20px; margin-top: -1px; }
.scheme { color: #0b8043; } .host { color: #000; }
.star { width: 15px; height: 15px; margin-left: auto; margin-right: 7px; }
.extensions { display: flex; align-items: center; margin-left: 10px; width: 130px; }
.extensions > svg { margin-right: 12px; }
.opera { position: relative; }
.opera b { position: absolute; left: 7px; top: 6px; background: #666; color: #fff; font-size: 9px; line-height: 11px; padding: 0 3px; border-radius: 1px; }
.we { width: 15px; margin-left: 13px; margin-top: -3px; color: #332c2c; font-weight: 900; font-size: 10px; letter-spacing: -1.200px; }
.dots { width: 3px; height: 3px; margin-left: 18px; border-radius: 50%; background: #5a5a5a; box-shadow: 0 -5px #5a5a5a, 0 5px #5a5a5a; }

.page { height: 708px; flex: none; overflow: hidden; position: relative; background: #fff; padding: 1px 0 0 218px; }
.people { list-style: none; margin: 0; padding: 0; font: 16px "Liberation Sans", Arial, sans-serif; letter-spacing: .03px; color: #265699; }
.people li { height: 25px; display: flex; align-items: center; white-space: nowrap; }
.people svg { width: 20px; height: 20px; margin-top: -2px; }
.scrollbar { position: absolute; right: 2px; top: 246px; width: 7px; height: 54px; border-radius: 4px; background: #808080; }

.downloads { height: 44px; flex: none; display: flex; align-items: center; gap: 2px; padding: 0 4px; background: linear-gradient(#f2f2f2, #e3e3e3); border-top: 1px solid #b0b0b0; box-shadow: inset 0 1px #d5d5d5; font-size: 11px; color: #111; }
.item { width: 206px; height: 32px; flex: none; margin-top: -3px; display: flex; align-items: center; border: 1px solid #b8b8b8; border-radius: 3px; background: linear-gradient(#f8f8f8, #eaeaea); padding-left: 11px; }
.doc { width: 12px; height: 15px; }
.name { width: 155px; margin-left: 13px; line-height: 15px; white-space: nowrap; }
.name small { font-size: 11px; color: #333; letter-spacing: .28px; }
.progress .name { letter-spacing: .17px; margin-top: 1px; }
.pdf { letter-spacing: .06px; }
.wide { letter-spacing: .3px; }
.db { letter-spacing: .2px; }
.ringdoc { width: 28px; height: 28px; }
.progress { padding-left: 4px; }
.progress .name { margin-left: 4px; }
.more { flex: 1; height: 30px; border-left: 1px solid #d0d0d0; position: relative; margin-left: -1px; }
.more::after { content: ""; position: absolute; left: 4px; top: 12px; border: 2.500px solid transparent; border-top: 4px solid #222; border-bottom: 0; }
.showall { width: 89px; height: 32px; margin-top: -3px; margin-left: auto; border: 1px solid #b8b8b8; border-radius: 3px; background: linear-gradient(#f8f8f8, #eaeaea); display: flex; align-items: center; gap: 5px; padding-left: 12px; white-space: nowrap; }
.showall svg { width: 14px; height: 14px; }
.dismiss { width: 9px; height: 9px; color: #111; margin: 0 8px 0 6px; }

.dock { width: 1316px; height: 52px; flex: none; margin-left: 62px; display: flex; padding: 2px 0 0 1.500px; border: 0 solid #0004; border-width: 0 1px; border-radius: 4px 4px 0 0; background: linear-gradient(90deg, #735135, #755a42 10%, #777370 22%, #747372 75%, #73665a 85%, #714f33 94%); font-family: Inter, sans-serif; }
.app { width: 43px; height: 50px; flex: none; position: relative; }
.app svg { width: 43px; height: 50px; }
.adobe text { font: 500 19px "Noto Sans", "Open Sans", sans-serif; letter-spacing: -.3px; text-anchor: middle; }
.running::after { content: ""; position: absolute; left: 19.500px; top: 44px; width: 4px; height: 4px; border-radius: 50%; background: #f5eee8; }
.divider { width: 1px; height: 38px; margin: 4px 8.500px 0 9.500px; background: #a69a8b; }
```
